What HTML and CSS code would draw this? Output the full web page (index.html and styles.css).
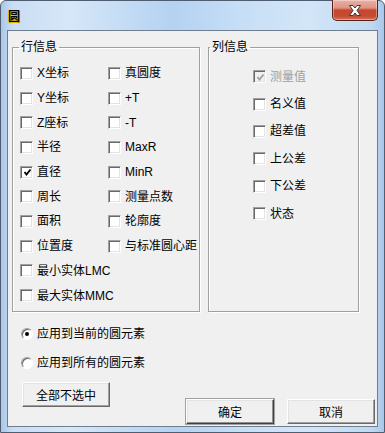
FILE: index.html
```html
<!DOCTYPE html>
<html lang="zh-CN">
<head>
  <meta charset="UTF-8" />
  <title>圆</title>
  <link rel="stylesheet" href="styles.css">
</head>
<body>

<div class="window">
  <!--  TITLE BAR  -->
  <div class="titlebar">
    <span class="app-icon">圆</span>
    <div class="close-btn">
      <svg width="14" height="11" viewBox="0 0 14 11">
        <polygon points="1.5,0.5 5,0.5 7,3 9,0.5 12.5,0.5 9,5.5 12.5,10.5 9,10.5 7,8 5,10.5 1.5,10.5 5,5.5" fill="#fff" stroke="#3a3a3a" stroke-width="1"/>
      </svg>
    </div>
  </div>

  <div class="client">
    <div class="groups">
      <!--  ROW INFO  -->
      <fieldset class="group group-rows">
        <legend>行信息</legend>
        <div class="row-grid">
          <label class="check"><span class="box"></span>X坐标</label>
          <label class="check"><span class="box"></span>真圆度</label>
          <label class="check"><span class="box"></span>Y坐标</label>
          <label class="check"><span class="box"></span>+T</label>
          <label class="check"><span class="box"></span>Z座标</label>
          <label class="check"><span class="box"></span>-T</label>
          <label class="check"><span class="box"></span>半径</label>
          <label class="check"><span class="box"></span>MaxR</label>
          <label class="check"><span class="box checked"><svg width="9" height="9" viewBox="0 0 9 9"><polyline points="1.5,4 3.5,6.5 7.5,1.5" fill="none" stroke="#000" stroke-width="1.8"/></svg></span>直径</label>
          <label class="check"><span class="box"></span>MinR</label>
          <label class="check"><span class="box"></span>周长</label>
          <label class="check"><span class="box"></span>测量点数</label>
          <label class="check"><span class="box"></span>面积</label>
          <label class="check"><span class="box"></span>轮廓度</label>
          <label class="check"><span class="box"></span>位置度</label>
          <label class="check"><span class="box"></span>与标准圆心距</label>
          <label class="check wide"><span class="box"></span>最小实体LMC</label>
          <label class="check wide"><span class="box"></span>最大实体MMC</label>
        </div>
      </fieldset>

      <!--  COLUMN INFO  -->
      <fieldset class="group group-cols">
        <legend>列信息</legend>
        <div class="col-list">
          <label class="check disabled"><span class="box checked"><svg width="9" height="9" viewBox="0 0 9 9"><polyline points="1.5,4 3.5,6.5 7.5,1.5" fill="none" stroke="#a0a0a0" stroke-width="1.8"/></svg></span>测量值</label>
          <label class="check"><span class="box"></span>名义值</label>
          <label class="check"><span class="box"></span>超差值</label>
          <label class="check"><span class="box"></span>上公差</label>
          <label class="check"><span class="box"></span>下公差</label>
          <label class="check"><span class="box"></span>状态</label>
        </div>
      </fieldset>
    </div>

    <!--  SCOPE  -->
    <div class="scope">
      <label class="radio"><span class="circle on"></span>应用到当前的圆元素</label>
      <label class="radio"><span class="circle"></span>应用到所有的圆元素</label>
    </div>

    <!--  BUTTONS  -->
    <div class="footer">
      <button class="btn">全部不选中</button>
      <div class="footer-right">
        <button class="btn default">确定</button>
        <button class="btn">取消</button>
      </div>
    </div>
  </div>
</div>

</body>
</html>
```

FILE: styles.css
```css
/* ----------  GLOBAL  ---------- */
*{box-sizing:border-box}
html,body{margin:0;padding:0}
body{background:#fff;font-family:"Liberation Sans","Noto Sans CJK SC",sans-serif;font-size:12px;color:#000}

/* ----------  WINDOW FRAME  ---------- */
.window{width:385px;height:433px;border:1px solid #4e5e70;border-radius:6px 6px 0 0;
  background:linear-gradient(90deg,#a9c7e8 0,#c9def4 3%,#d6e7f8 18%,#b4d2f1 45%,#c6def6 62%,#d3e6f8 80%,#bfd8f1 97%,#a9c7e8 100%);
  display:flex;flex-direction:column}
.titlebar{height:29px;display:flex;align-items:flex-start;padding:0 6px 0 7px}
.app-icon{margin-top:8px;font-size:12px;line-height:13px;font-weight:bold;font-family:"Noto Sans CJK SC",sans-serif;color:#000;text-shadow:1px 1px 0 #e4b800,-1px 0 0 #f3d84a}
.close-btn{margin-left:auto;margin-top:-1px;width:46px;height:21px;border:1px solid #5a2219;border-top:none;border-radius:0 0 5px 5px;
  background:linear-gradient(#eab1a5 0,#de9383 40%,#c8472f 50%,#c44a31 80%,#d2735a 100%);
  box-shadow:inset 0 0 0 1px rgba(255,255,255,.35);display:flex;align-items:center;justify-content:center}
.close-btn svg{display:block;margin-top:1px}

/* ----------  CLIENT AREA  ---------- */
.client{flex:1;margin:0 6px 5px 6px;border:1px solid #6f7e8e;background:#f0f0f0;padding:9px 0 0 4px;display:flex;flex-direction:column}
.groups{display:flex;gap:8px;align-items:stretch}
.group{margin:0;padding:0;min-width:0;border:1px solid #a0a0a0;box-shadow:inset 1px 1px 0 #fff,1px 1px 0 #fff}
.group legend{padding:0 2px;line-height:14px;font-size:12px}
.group-rows{width:188px}
.group-rows legend{margin-left:6px}
.group-cols{width:151px}
.group-cols legend{margin-left:1px}

.row-grid{display:grid;grid-template-columns:88px 1fr;grid-auto-rows:24.7px;padding:7px 0 3px 7px}
.row-grid .wide{grid-column:1 / -1}
.col-list{display:grid;grid-auto-rows:27.4px;padding:9px 0 0 44px}

/* ----------  CHECKBOX / RADIO  ---------- */
.check,.radio{display:flex;align-items:center;white-space:nowrap;line-height:14px}
.box{width:13px;height:13px;flex:none;margin-right:4px;background:#fff;border:1px solid;border-color:#a0a0a0 #fff #fff #a0a0a0;
  box-shadow:inset 1px 1px 0 #696969,inset -1px -1px 0 #e3e3e3;display:flex;align-items:center;justify-content:center}
.box svg{display:block;margin:1px 0 0 1px}
.disabled{color:#a0a0a0}
.disabled .box{background:#f0f0f0}

.scope{margin-top:8px;padding-left:9px}
.radio{height:29px}
.circle{width:12px;height:12px;flex:none;margin-right:4px;border-radius:50%;background:#fff;border:1px solid;border-color:#a0a0a0 #fff #fff #a0a0a0;
  box-shadow:inset 1px 1px 0 #696969;display:flex;align-items:center;justify-content:center}
.circle.on::after{content:"";width:4px;height:4px;border-radius:50%;background:#000}

/* ----------  BUTTONS  ---------- */
.footer{margin-top:4px;height:42px;display:flex;justify-content:space-between;align-items:flex-start;padding:0 2px 0 10px}
.footer-right{align-self:flex-end;display:flex;gap:13px}
.btn{width:88px;height:25px;padding:0;font:inherit;font-size:12px;color:#000;background:#f0f0f0;border:1px solid;border-color:#fff #696969 #696969 #fff;
  box-shadow:inset -1px -1px 0 #a0a0a0,inset 1px 1px 0 #e3e3e3}
.btn.default{border-color:#fff #404040 #404040 #fff;box-shadow:0 0 0 1px #a0a0a0,inset -1px -1px 0 #909090,inset 1px 1px 0 #e3e3e3}
```
